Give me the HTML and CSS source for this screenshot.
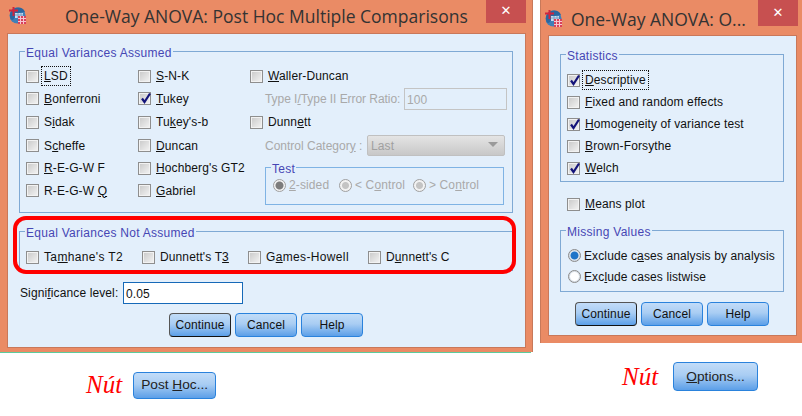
FILE: index.html
```html
<!DOCTYPE html>
<html lang="vi">
<head>
<meta charset="utf-8">
<title>One-Way ANOVA</title>
<link rel="stylesheet" href="styles.css">
</head>
<body>
<svg class="defs" width="0" height="0" aria-hidden="true">
  <defs>
    <symbol id="appicon" viewBox="0 0 17 17">
      <circle cx="8.5" cy="8.5" r="8" fill="#3f7fb8"/>
      <path d="M1 8.5a8 8 0 0 1 15-3.8L9 6 4 13 1.8 12.6A8 8 0 0 1 1 8.5z" fill="#2b669f"/>
      <rect x="6" y="6" width="8" height="5" fill="#c7dcf0"/>
      <path d="M6 8h8M9 6v5M12 6v5" stroke="#7fa3c8" stroke-width="1"/>
      <path d="M4.5 0v9M0 3.500h9" stroke="#d3243c" stroke-width="2" fill="none"/>
      <rect x="9" y="9" width="8" height="8" fill="#d8415c"/>
      <path d="M9 11.500h8M9 14.500h8M11.500 9v8M14.500 9v8" stroke="#f6c6cf" stroke-width="1"/>
    </symbol>
    <symbol id="tick" viewBox="0 0 13 13">
      <path d="M3 6.500l2.500 3.500L11 1.500" fill="none" stroke="#14147a" stroke-width="2.200"/>
    </symbol>
  </defs>
</svg>

<section class="window window-hoc">
  <header class="titlebar">
    <svg class="appicon"><use href="#appicon"/></svg>
    <h1 class="title title-hoc">One-Way ANOVA: Post Hoc Multiple Comparisons</h1>
    <div class="close close-hoc">✕</div>
  </header>
  <div class="client client-hoc">
    <fieldset class="group group-assumed">
      <legend>Equal Variances Assumed</legend>
      <div class="hoc-grid">
        <label class="opt"><i class="cb"></i><span class="focus"><u>L</u>SD</span></label>
        <label class="opt"><i class="cb"></i><span><u>S</u>-N-K</span></label>
        <label class="opt"><i class="cb"></i><span><u>W</u>aller-Duncan</span></label>

        <label class="opt"><i class="cb"></i><span><u>B</u>onferroni</span></label>
        <label class="opt"><i class="cb"><svg class="tick"><use href="#tick"/></svg></i><span><u>T</u>ukey</span></label>
        <div class="sub-row dim"><span class="ratio-label">Type I<u>/</u>Type II Error Ratio:</span><span class="ratio-box">100</span></div>

        <label class="opt"><i class="cb"></i><span>S<u>i</u>dak</span></label>
        <label class="opt"><i class="cb"></i><span>Tu<u>k</u>ey's-b</span></label>
        <label class="opt"><i class="cb"></i><span>Dunn<u>e</u>tt</span></label>

        <label class="opt"><i class="cb"></i><span>S<u>c</u>heffe</span></label>
        <label class="opt"><i class="cb"></i><span><u>D</u>uncan</span></label>
        <div class="sub-row dim"><span class="cat-label">Control Categor<u>y</u> :</span><span class="select">Last<i class="arrow"></i></span></div>

        <label class="opt"><i class="cb"></i><span><u>R</u>-E-G-W F</span></label>
        <label class="opt"><i class="cb"></i><span><u>H</u>ochberg's GT2</span></label>
        <fieldset class="group group-test">
          <legend>Test</legend>
          <div class="test-row dim">
            <span class="radio-opt r1"><i class="rd rd-dim rd-on"></i><span><u>2</u>-sided</span></span>
            <span class="radio-opt r2"><i class="rd rd-dim"></i><span>&lt; C<u>o</u>ntrol</span></span>
            <span class="radio-opt"><i class="rd rd-dim"></i><span>&gt; Co<u>n</u>trol</span></span>
          </div>
        </fieldset>

        <label class="opt"><i class="cb"></i><span>R-E-G-W <u>Q</u></span></label>
        <label class="opt"><i class="cb"></i><span><u>G</u>abriel</span></label>
      </div>
    </fieldset>

    <fieldset class="group group-not">
      <legend>Equal Variances Not Assumed</legend>
      <div class="not-row">
        <label class="opt not-1"><i class="cb"></i><span>Ta<u>m</u>hane's T2</span></label>
        <label class="opt not-2"><i class="cb"></i><span>Dunnett's T<u>3</u></span></label>
        <label class="opt not-3"><i class="cb"></i><span>G<u>a</u>mes-Howell</span></label>
        <label class="opt"><i class="cb"></i><span>D<u>u</u>nnett's C</span></label>
      </div>
    </fieldset>

    <div class="sig-row">
      <span class="sig-label">Signi<u>f</u>icance level:</span>
      <span class="sig-input">0.05</span>
    </div>
    <div class="btn-row btn-row-hoc">
      <span class="btn btn-default">Continue</span>
      <span class="btn">Cancel</span>
      <span class="btn">Help</span>
    </div>
  </div>
  <div class="highlight"></div>
</section>

<section class="window window-opt">
  <header class="titlebar">
    <svg class="appicon appicon-opt"><use href="#appicon"/></svg>
    <h1 class="title title-opt">One-Way ANOVA: O...</h1>
    <div class="close close-opt">✕</div>
  </header>
  <div class="client client-opt">
    <fieldset class="group group-stats">
      <legend>Statistics</legend>
      <div class="stack">
        <label class="opt"><i class="cb"><svg class="tick"><use href="#tick"/></svg></i><span class="focus"><u>D</u>escriptive</span></label>
        <label class="opt"><i class="cb"></i><span><u>F</u>ixed and random effects</span></label>
        <label class="opt"><i class="cb"><svg class="tick"><use href="#tick"/></svg></i><span><u>H</u>omogeneity of variance test</span></label>
        <label class="opt"><i class="cb"></i><span><u>B</u>rown-Forsythe</span></label>
        <label class="opt"><i class="cb"><svg class="tick"><use href="#tick"/></svg></i><span><u>W</u>elch</span></label>
      </div>
    </fieldset>
    <label class="opt means"><i class="cb"></i><span><u>M</u>eans plot</span></label>
    <fieldset class="group group-missing">
      <legend>Missing Values</legend>
      <div class="stack stack-radio">
        <span class="radio-opt"><i class="rd rd-on"></i><span>Exclude c<u>a</u>ses analysis by analysis</span></span>
        <span class="radio-opt"><i class="rd"></i><span>Exc<u>l</u>ude cases listwise</span></span>
      </div>
    </fieldset>
    <div class="btn-row btn-row-opt">
      <span class="btn btn-default">Continue</span>
      <span class="btn">Cancel</span>
      <span class="btn">Help</span>
    </div>
  </div>
</section>

<div class="caption caption-hoc">
  <em class="nut">Nút</em>
  <span class="btn btn-launch btn-posthoc"><span>Post <u>H</u>oc...</span></span>
</div>
<div class="caption caption-opt">
  <em class="nut">Nút</em>
  <span class="btn btn-launch btn-options"><span><u>O</u>ptions...</span></span>
</div>
</body>
</html>
```
FILE: styles.css
```css
* { box-sizing: border-box; }
html, body { margin: 0; padding: 0; }
body {
  position: relative;
  width: 802px;
  height: 416px;
  overflow: hidden;
  background: #fff;
  font: 12px/14px "Liberation Sans", Arial, sans-serif;
  letter-spacing: 0.12px;
  color: #111;
}
.defs { position: absolute; }

/* windows on the canvas */
.window {
  position: absolute;
  top: 0;
  display: flex;
  flex-direction: column;
  background: #ea8b65;
}
.window-hoc { left: 0; width: 533px; height: 352px; box-shadow: inset -1px 0 #c8795a; margin-bottom: 1px; }
.window-hoc::after {
  content: "";
  position: absolute;
  left: 0;
  top: 352px;
  width: 531px;
  height: 1px;
  background: #5ccb9c;
}
.window-opt { left: 540px; width: 262px; height: 343px; box-shadow: inset 1px 0 #c8795a; }

.titlebar { display: flex; align-items: flex-start; flex: none; }
.window-hoc .titlebar { height: 33px; }
.window-opt .titlebar { height: 35px; }
.appicon { width: 17px; height: 17px; flex: none; margin: 7px 0 0 9px; }
.appicon-opt { margin: 10px 0 0 5px; }
.title {
  margin: 0;
  font: 400 17.5px/22px "Open Sans", sans-serif;
  letter-spacing: 0;
  color: #333;
  white-space: nowrap;
}
.title-hoc { margin: 5px 0 0 39px; }
.title-opt { margin: 8px 0 0 9px; }
.close {
  margin-left: auto;
  width: 40px;
  background: #c75050;
  color: #fff;
  text-align: center;
  font: 700 13px/22px "DejaVu Sans", sans-serif;
  flex: none;
}
.close-hoc { height: 23px; margin-right: 7px; }
.close-opt { height: 26px; margin-right: 4px; line-height: 25px; }

.client {
  flex: 1;
  background: #e3effb;
  border: 1px solid #c9785a;
}
.client-hoc { margin: 0 7px 4px 7px; padding: 8px 12px 0 11px; }
.client-opt { margin: 0 5px 7px 8px; padding: 9px 12px 0 11px; }

/* group boxes */
.group {
  margin: 0;
  border: 1px solid #7fa9d4;
  padding: 5px 0 0 6px;
  min-width: 0;
}
.group legend {
  margin-left: -1px;
  padding: 4px 1px 0;
  color: #4646b4;
  line-height: 14px;
  letter-spacing: 0.28px;
}
.group-assumed { height: 171px; }
.group-not { margin-top: 9px; height: 49px; padding-top: 6px; }
.group-stats { height: 137px; padding-top: 6px; }
.group-missing { height: 71px; margin-top: 6px; padding-top: 6px; }

.hoc-grid {
  display: grid;
  grid-template-columns: 112px 112px 1fr;
  grid-template-rows: 22px 23px 24px 23px 22px 23px;
}
.opt { display: flex; align-items: center; white-space: nowrap; }
.opt > span { margin-left: 5px; }
.cb {
  position: relative;
  flex: none;
  width: 13px;
  height: 13px;
  border: 1px solid #8e8e8e;
  background: linear-gradient(135deg, #c8c8c8, #f4f4f4);
  box-shadow: inset 0 0 0 1px #f2f2f2;
}
.tick { position: absolute; left: 0; top: -1px; width: 13px; height: 13px; }
.focus { outline: 1px dotted #111; outline-offset: 2px; }

.dim { color: #a9a9a9; }
.sub-row { display: flex; align-items: center; padding-left: 15px; white-space: nowrap; }
.ratio-label { width: 139px; letter-spacing: -0.05px; }
.ratio-box {
  width: 103px;
  height: 22px;
  border: 1px solid #c4c4c4;
  padding: 5px 2px;
  line-height: 12px;
}
.cat-label { width: 102px; letter-spacing: 0; }
.select {
  position: relative;
  width: 138px;
  height: 21px;
  margin-top: -1px;
  padding: 3px;
  border: 1px solid #c0c0c0;
  border-radius: 2px;
  background: linear-gradient(#e4e4e4, #c8c8c8);
  color: #a0a0a0;
}
.arrow {
  position: absolute;
  right: 6px;
  top: 6px;
  border: 5px solid transparent;
  border-top: 5px solid #9a9a9a;
  border-bottom: 0;
}

.group-test {
  grid-column: 3;
  grid-row: 5 / 7;
  height: 47px;
  margin: 1px 0 0 15px;
  width: 239px;
  padding: 2px 0 0 7px;
  border-color: #7fb3e4;
}
.group-test legend { margin-left: -2px; }
.test-row { display: flex; height: 14px; }
.radio-opt { display: flex; align-items: center; white-space: nowrap; }
.radio-opt > i + span { margin-left: 3px; }
.r1 { width: 66px; }
.r2 { width: 74px; }
.rd {
  flex: none;
  display: block;
  width: 13px;
  height: 13px;
  border-radius: 50%;
  border: 1px solid #8a8a8a;
  background: #fff;
  box-shadow: inset 0 0 0 1px #d5dde6;
}
.rd-on { background: radial-gradient(circle, #1f74c8 0 3.5px, #e8eef5 4.5px); }
.rd-dim { border-color: #a0a0a0; background: radial-gradient(circle, #c4c4c4 0 3px, #f2f2f2 4px); box-shadow: none; }
.rd-dim.rd-on { background: radial-gradient(circle, #7c7c7c 0 3.5px, #f2f2f2 4.5px); }

.not-row { display: flex; height: 22px; }
.not-1 { width: 116px; letter-spacing: 0.35px; }
.not-2 { width: 106px; }
.not-3 { width: 120px; letter-spacing: 0.35px; }

.sig-row { display: flex; align-items: center; margin-top: 11px; padding-left: 1px; }
.sig-label { width: 103px; }
.sig-input {
  width: 120px;
  height: 22px;
  border: 1px solid #1669b8;
  background: #fff;
  padding: 5px 2px;
  line-height: 13px;
}

/* buttons */
.btn-row { display: flex; gap: 4px; }
.btn-row-hoc { margin: 9px 0 0 150px; }
.btn-row-opt { margin: 10px 0 0 15px; }
.btn {
  display: flex;
  align-items: center;
  justify-content: center;
  width: 62px;
  height: 24px;
  border: 1px solid #2a82dc;
  border-radius: 4px;
  background: linear-gradient(#c2dcf8, #a9cdf3 45%, #5c9fe8);
  color: #111;
}
.btn-default { border-color: #555 #222 #111 #555; }

.highlight {
  position: absolute;
  left: 13px;
  top: 216px;
  width: 503px;
  height: 58px;
  border: 4px solid #f00;
  border-radius: 13px;
}

/* labels under the windows */
.caption { position: absolute; display: flex; align-items: center; }
.caption-hoc { left: 86px; top: 371px; }
.caption-opt { left: 622px; top: 362px; }
.nut {
  font: italic 400 25px/28px "Liberation Serif", serif;
  letter-spacing: 0;
  color: #f00;
}
.btn-launch { font-size: 13.7px; letter-spacing: 0; color: #222; }
.btn-posthoc { width: 83px; height: 27px; margin-left: 11px; }
.btn-options { width: 85px; height: 29px; margin-left: 15px; }

/* option window */
.stack { display: grid; grid-auto-rows: 22px; }
.means { height: 22px; margin: 11px 0 0 7px; }
.stack-radio { grid-auto-rows: 21px; padding-left: 1px; }
```
